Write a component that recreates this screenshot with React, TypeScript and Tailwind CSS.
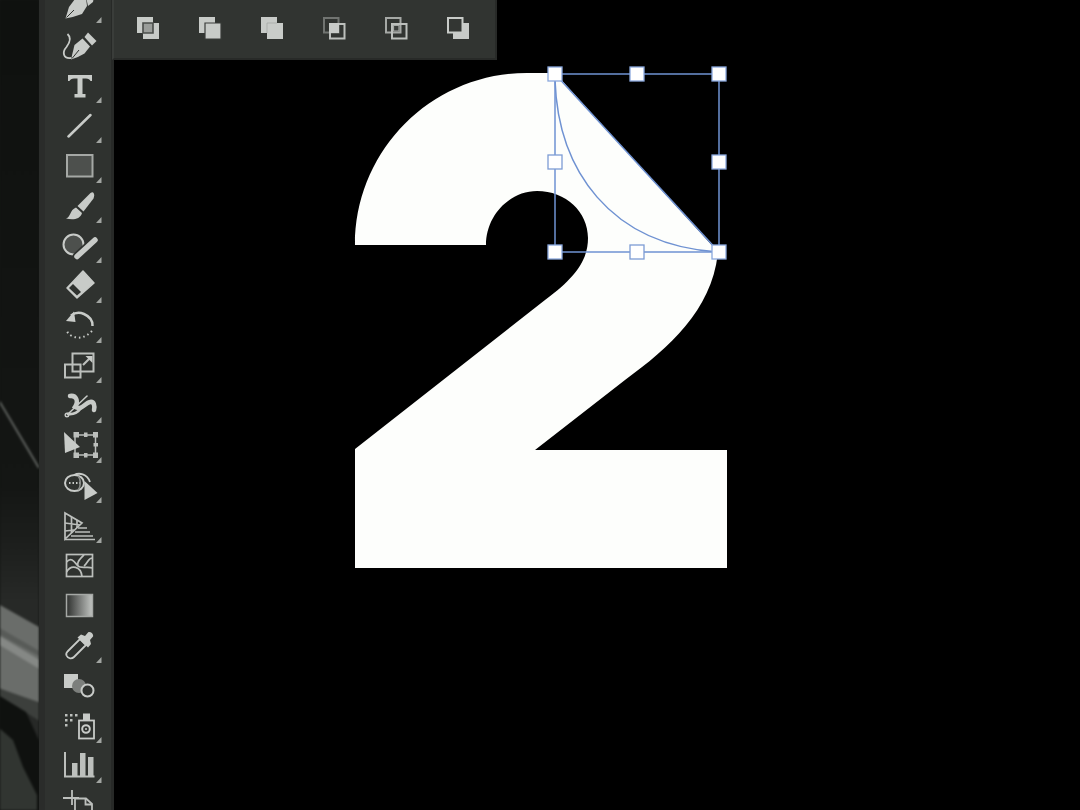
import React from "react";

const L = "#c8cbc8";
const G = "#bcbfbc";
const D = "#2f322f";
const M = "#4d504d";

const Tri = ({ top }: { top: number }) => (
  <path d={`M96 ${top + 37}H101.5V${top + 31}Z`} fill="#a2a5a2" />
);

type Tool = { top: number; tri: boolean; art: React.ReactNode };

const tools: Tool[] = [
  {
    top: -14,
    tri: true,
    art: (
      <g>
        <path d="M65.500 18.500L69 7L75 -1L86 -2L87 6L82 14Q74 17 65.500 18.500Z" fill={L} />
        <path d="M66.500 17.500L74 10" stroke={D} strokeWidth="1" />
        <path d="M86 -3L94 -3L93 2L88 6Z" fill={L} />
      </g>
    ),
  },
  {
    top: 26,
    tri: false,
    art: (
      <g>
        <path d="M71 59.500L74.500 45L82.500 38.500L90 46.500L84.500 53.500Q78 57.500 71 59.500Z" fill={L} />
        <path d="M72 58.500L79 50" stroke={D} strokeWidth="1" />
        <path d="M84.500 37L88 32.500L96.500 41L92 45.500Z" fill={L} />
        <path d="M67.500 34C72 38 69.500 43 66.500 47C62 52 63 59 71 58" stroke={L} strokeWidth="1.800" fill="none" />
      </g>
    ),
  },
  {
    top: 66,
    tri: true,
    art: (
      <path
        d="M68 75H92V81H90.500Q89.500 78.500 86 78.500H82.500V94H85.500V97.500H74.500V94H77.500V78.500H74Q70.500 78.500 69.500 81H68Z"
        fill={L}
      />
    ),
  },
  {
    top: 106,
    tri: true,
    art: <path d="M68.500 136.500L90.500 115" stroke={L} strokeWidth="2.500" strokeLinecap="round" />,
  },
  {
    top: 146,
    tri: true,
    art: <rect x="67" y="155" width="25.500" height="21.500" fill={M} stroke="#a5a8a5" strokeWidth="2" />,
  },
  {
    top: 186,
    tri: true,
    art: (
      <g>
        <path d="M66 218.500C71 217 69.500 210 76 207.500L82 213C80 220 72 220 66 218.500Z" fill={L} />
        <path d="M77.500 206L90.500 193C94 190.500 95 195 93.500 198.500L83.500 211.500Z" fill={L} />
      </g>
    ),
  },
  {
    top: 226,
    tri: true,
    art: (
      <g>
        <circle cx="73.500" cy="244.500" r="10" fill={M} stroke={L} strokeWidth="2" />
        <path d="M77 256.500L95 240" stroke={D} strokeWidth="9" strokeLinecap="round" />
        <path d="M77 256.500L95 240" stroke={L} strokeWidth="5.500" strokeLinecap="round" />
      </g>
    ),
  },
  {
    top: 266,
    tri: true,
    art: (
      <g>
        <path d="M67 288L83 271L94 283L77 298Z" fill={L} stroke={L} strokeWidth="1.500" strokeLinejoin="round" />
        <path d="M69 288L73 284L81 292L77 295.500Z" fill={D} />
      </g>
    ),
  },
  {
    top: 306,
    tri: true,
    art: (
      <g>
        <path d="M66 321L74 311.500L75.500 322Z" fill={L} />
        <path d="M71 315.500Q77 311 84 314Q93 318 92.500 326" stroke={L} strokeWidth="2.500" fill="none" />
        <path d="M92 331Q82 341 72 336Q68 334 67 331" stroke={L} strokeWidth="2" strokeDasharray="1.500 3" fill="none" />
      </g>
    ),
  },
  {
    top: 346,
    tri: true,
    art: (
      <g fill="none" stroke={G} strokeWidth="2">
        <rect x="72.500" y="353.500" width="21" height="18" />
        <rect x="65" y="364.500" width="15.500" height="13" />
        <path d="M83 365L90 358" strokeWidth="2.200" />
        <path d="M85.500 356H92.500V363Z" fill={L} stroke="none" />
      </g>
    ),
  },
  {
    top: 386,
    tri: true,
    art: (
      <g fill="none" stroke={L} strokeLinecap="round">
        <path d="M70 396C76 395 79 401 75 407C81 411 85 403 90 402C94 401 95 406 94 410" strokeWidth="4.500" />
        <path d="M68 414L87 396" strokeWidth="1.500" />
        <path d="M68 414Q76 415 81 408" strokeWidth="2.800" />
        <circle cx="67" cy="415" r="1.800" strokeWidth="1.400" />
      </g>
    ),
  },
  {
    top: 426,
    tri: true,
    art: (
      <g>
        <rect x="75" y="435" width="20.500" height="20" fill="none" stroke={G} strokeWidth="1.500" />
        <path d="M73.500 432H79V437.500H73.500ZM93 432H98V437.500H93ZM93 452.500H98V458H93ZM73.500 452.500H79V458H73.500ZM84 432.500H87.500V437H84ZM93.500 443H98V446.500H93.500ZM84 453H87.500V457.500H84Z" fill={G} />
        <path d="M64 432L80 447L65 453Z" fill={L} />
      </g>
    ),
  },
  {
    top: 466,
    tri: true,
    art: (
      <g>
        <ellipse cx="74.500" cy="483" rx="9.500" ry="8" fill="none" stroke={L} strokeWidth="2" />
        <path d="M74 475C79 472.500 87 473.500 90 482" fill="none" stroke={L} strokeWidth="1.800" />
        <path d="M78 476C81 479 81 487 78 490" fill="none" stroke="#8a8d8a" strokeWidth="1.500" />
        <path d="M69 483H80" stroke={L} strokeWidth="1.800" strokeDasharray="1.500 2" />
        <path d="M84.500 481L97.500 493L84.500 500Z" fill={L} />
      </g>
    ),
  },
  {
    top: 506,
    tri: true,
    art: (
      <g fill="none" stroke={G} strokeWidth="1.700">
        <path d="M65 513L82 523L65 539Z" />
        <path d="M71.500 517V533M77 520V528M65 523L80 525M65 531L74 530" />
        <path d="M78 528H87M75 532H90M71 536H93M65 539.500H95" />
      </g>
    ),
  },
  {
    top: 546,
    tri: false,
    art: (
      <g fill="none" stroke={G} strokeWidth="1.700">
        <rect x="66.500" y="554.500" width="26" height="22" />
        <path d="M66.500 562C72 556 75 563 78 566C81 569 88 566 92.500 568" />
        <path d="M66.500 572C71 564 81 566 82 576.500" />
        <path d="M78 566C76 561 82 558 84 554.500M84 566C88 563 88 558 92.500 558" />
      </g>
    ),
  },
  {
    top: 586,
    tri: false,
    art: (
      <g>
        <defs>
          <linearGradient id="grad" x1="0" x2="1" y1="0" y2="0">
            <stop offset="0" stopColor="#2e302e" />
            <stop offset="1" stopColor="#c2c5c2" />
          </linearGradient>
        </defs>
        <rect x="66.500" y="594.500" width="26" height="22" fill="url(#grad)" stroke="#a5a8a5" strokeWidth="1.500" />
      </g>
    ),
  },
  {
    top: 626,
    tri: true,
    art: (
      <g>
        <path d="M66.500 655.500C65.500 653 67 652 68 651L80 639L86 645L74 657C72 659 68 659 66.500 655.500Z" fill={D} stroke={L} strokeWidth="1.800" />
        <path d="M77.500 637.500L81 634.500L85 636L88 632.500C90 631 94 634 93 636.500L90 640L91 644L88 647.500Z" fill={L} />
      </g>
    ),
  },
  {
    top: 666,
    tri: false,
    art: (
      <g>
        <rect x="64" y="674" width="14" height="14" fill={L} />
        <circle cx="79" cy="686" r="7" fill="#7c7f7c" />
        <circle cx="87.500" cy="690.500" r="6" fill={D} stroke={L} strokeWidth="2" />
      </g>
    ),
  },
  {
    top: 706,
    tri: true,
    art: (
      <g>
        <path d="M65 714h2.500v2.500h-2.500zM70 714h2.500v2.500h-2.500zM75 714h2.500v2.500h-2.500zM65 719h2.500v2.500h-2.500zM70 719h2.500v2.500h-2.500zM65 724h2.500v2.500h-2.500z" fill={G} />
        <path d="M83 713.500H90V720H83Z" fill={L} />
        <rect x="79" y="720.500" width="15" height="18" fill="none" stroke={L} strokeWidth="1.800" />
        <circle cx="86" cy="729" r="3.800" fill="none" stroke={L} strokeWidth="2" />
        <circle cx="86" cy="729" r="1" fill={L} />
      </g>
    ),
  },
  {
    top: 746,
    tri: true,
    art: (
      <g>
        <path d="M65 752V776.500H94.500" fill="none" stroke={G} strokeWidth="2" />
        <path d="M72 763H77.500V776H72ZM80 753H85.500V776H80ZM88 757H93.500V776H88Z" fill={G} />
      </g>
    ),
  },
  {
    top: 786,
    tri: false,
    art: (
      <g fill="none" stroke={G} strokeWidth="1.800">
        <path d="M72 790V805M63 798H79" />
        <path d="M75 812V798.500H86L92 804V812" fill={D} />
        <path d="M85.500 798.500V804.500H92" />
      </g>
    ),
  },
];

function ToolIcon({ top, tri, art }: Tool) {
  return (
    <div className="h-[40px] w-[50px] ml-[10px] shrink-0">
      <svg width="50" height="40" viewBox={`55 ${top} 50 40`} className="block overflow-visible blur-[0.4px]">
        {art}
        {tri && <Tri top={top} />}
      </svg>
    </div>
  );
}

const A = "M1 1H17V17H1Z";
const B = "M7 7H23V23H7Z";
const O = "M7 7H17V17H7Z";

const pathfinders: React.ReactNode[] = [
  <g key="1">
    <path d={A} fill={L} />
    <path d={B} fill={L} />
    <path d={O} fill="#9a9d9a" stroke="#4a4d4a" strokeWidth="1.600" />
  </g>,
  <g key="2">
    <path d={A} fill={L} />
    <path d={B} fill={L} stroke="#3a3d3a" strokeWidth="1.200" />
  </g>,
  <g key="3">
    <path d={A} fill={L} />
    <path d={B} fill="#c9ccc9" />
    <path d="M7 17V7H17" fill="none" stroke="#9a9d9a" strokeWidth="0.600" />
  </g>,
  <g key="4">
    <path d="M2 2H16.500V16.500H2Z" fill="none" stroke="#717471" strokeWidth="2" />
    <path d="M8 8H22.500V22.500H8Z" fill="none" stroke={G} strokeWidth="2" />
    <path d={O} fill={L} />
  </g>,
  <g key="5">
    <path d="M2 2H16.500V16.500H2Z" fill="none" stroke="#a5a8a5" strokeWidth="2" />
    <path d="M8 8H22.500V22.500H8Z" fill="none" stroke={G} strokeWidth="2" />
    <path d="M9.500 9.500H15V15H9.500Z" fill="#3a3d3a" stroke="#a5a8a5" strokeWidth="1.200" />
  </g>,
  <g key="6">
    <path d={B} fill={L} />
    <path d="M2 2H16.500V16.500H2Z" fill="#333633" stroke={L} strokeWidth="2" />
  </g>,
];

const handles: [number, number, boolean][] = [
  [555, 74, true],
  [637, 74, true],
  [719, 74, true],
  [719, 162, true],
  [719, 252, true],
  [637, 252, false],
  [555, 162, false],
  [555, 252, true],
];

export default function App() {
  return (
    <div className="w-[1080px] h-[810px] flex overflow-hidden bg-black">
      <div className="w-[39px] h-full shrink-0 bg-[#141614] overflow-hidden">
        <svg width="39" height="810" viewBox="0 0 39 810" className="block blur-[1px]">
          <defs>
            <linearGradient id="bd" x1="0" x2="0" y1="0" y2="1">
              <stop offset="0" stopColor="#0f110f" />
              <stop offset="0.6" stopColor="#141614" />
              <stop offset="0.68" stopColor="#1e201e" />
              <stop offset="0.74" stopColor="#272927" />
            </linearGradient>
          </defs>
          <rect x="-2" y="-2" width="43" height="814" fill="url(#bd)" />
          <path d="M-2 399L39 468" stroke="#5d605d" strokeWidth="2" />
          <path d="M-2 604L41 628V704L-2 688Z" fill="#6a6d6a" />
          <path d="M-2 635L41 661V670L-2 644Z" fill="#858885" />
          <path d="M-2 627L41 652V657L-2 634Z" fill="#585b58" />
          <path d="M-2 688L41 703V722L-2 695Z" fill="#3c3f3c" />
          <path d="M-2 695L26 712L41 745V812H-2Z" fill="#0f110f" />
          <path d="M-2 727L13 740L23 767L37 795V812H-2Z" fill="#313531" />
        </svg>
      </div>

      <div className="w-[75px] h-full shrink-0 bg-[#2f322f] border-l-[6px] border-l-[#2a2c2a] border-r-[3px] border-r-[#272927] overflow-hidden">
        <div className="flex flex-col -mt-[14px]">
          {tools.map((t) => (
            <ToolIcon key={t.top} {...t} />
          ))}
        </div>
      </div>

      <div className="relative flex-1 h-full">
        <svg width="966" height="810" viewBox="114 0 966 810" className="absolute inset-0 block">
          <path
            d="M355 245C355 150 432 73 527 73L555 73L718 252C712 310 670 347 625 380L535 450H727V568H355V449L545 300C578 276 588 258 588 238C588 212 566 191 537 191C510 191 486 215 486 245Z"
            fill="#fdfefc"
          />
          <g fill="none" stroke="#6f92d2" strokeWidth="1.500">
            <path d="M555 74H719V252H555Z" />
            <path d="M555 74L719 252" />
            <path d="M555 80C558 170 610 245 718 252" />
          </g>
          {handles.map(([x, y, solid]) => (
            <rect
              key={`${x}-${y}`}
              x={x - 7}
              y={y - 7}
              width="14"
              height="14"
              fill="#ffffff"
              stroke={solid ? "#8aa8de" : "#7d9cd4"}
              strokeWidth="1.300"
            />
          ))}
        </svg>

        <div className="relative z-10 -ml-[2px] w-[385px] h-[60px] bg-[#313431] border-l-[2px] border-l-[#3a3d3a] border-r-[2px] border-b-[2px] border-r-[#282a28] border-b-[#282a28] flex items-center gap-[38px] pl-[22px] pb-[2px]">
          {pathfinders.map((p, i) => (
            <svg key={i} width="24" height="24" viewBox="0 0 24 24" className="block shrink-0 blur-[0.3px]">
              {p}
            </svg>
          ))}
        </div>
      </div>
    </div>
  );
}
